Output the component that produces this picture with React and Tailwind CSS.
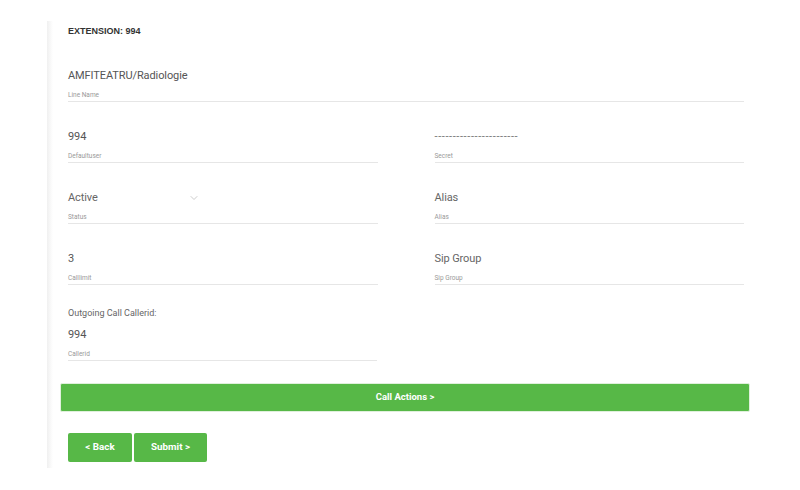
import { ChevronDown } from 'lucide-react'

function Field({ value, label, valueClass = 'text-[#555]', chevron = false }) {
  return (
    <div className="border-b border-[#e6e6e6] pb-[1px]">
      <div className="flex items-center h-[20px]">
        <span className={`text-[11px] tracking-[-0.1px] ${valueClass}`}>{value}</span>
        {chevron && <ChevronDown className="ml-[90px] h-3 w-3 text-[#bbb]" strokeWidth={1.5} />}
      </div>
      <div className="mt-[4px] text-[6.5px] leading-[10px] text-[#999]">{label}</div>
    </div>
  )
}

export default function App() {
  return (
    <div className="w-[800px] h-[490px] bg-white font-['Roboto',sans-serif] pt-[21px]">
      <div className="ml-[47px] h-[447px] bg-gradient-to-r from-[#f0f0f0] to-white w-[6px] float-left" />
      <div className="ml-[60px] w-[690px] pt-[5px]">
        <div className="pl-[8px] font-['Liberation_Sans',sans-serif] font-bold text-[9px] text-[#333] h-[10px] leading-[10px]">
          EXTENSION: 994
        </div>

        <div className="px-[8px] pr-[6px]">
          <div className="mt-[30px]">
            <Field value="AMFITEATRU/Radiologie" label="Line Name" />
          </div>

          <div className="grid grid-cols-2 gap-x-[57px] mt-[25px]">
            <Field value="994" label="Defaultuser" />
            <Field value="-----------------------" label="Secret" valueClass="text-[#777] tracking-[0.6px]" />
          </div>

          <div className="grid grid-cols-2 gap-x-[57px] mt-[25px]">
            <Field value="Active" label="Status" valueClass="text-[#666]" chevron />
            <Field value="Alias" label="Alias" valueClass="text-[#666]" />
          </div>

          <div className="grid grid-cols-2 gap-x-[57px] mt-[25px]">
            <Field value="3" label="Calllimit" />
            <Field value="Sip Group" label="Sip Group" valueClass="text-[#666]" />
          </div>

          <div className="w-[309px] mt-[21px]">
            <div className="text-[9px] text-[#666] h-[14px] leading-[14px]">Outgoing Call Callerid:</div>
            <div className="mt-[5px]">
              <Field value="994" label="Callerid" />
            </div>
          </div>
        </div>

        <button className="mt-[22px] w-full h-[29px] bg-[#57b847] border border-[#e0f0dc] rounded-[2px] text-white font-bold text-[9.5px]">
          Call Actions &gt;
        </button>

        <div className="flex gap-[2px] mt-[21px] pl-[8px]">
          <button className="w-[64px] h-[29px] bg-[#57b847] rounded-[2px] text-white font-bold text-[9.8px]">&lt; Back</button>
          <button className="w-[73px] h-[29px] bg-[#57b847] rounded-[2px] text-white font-bold text-[9.8px]">Submit &gt;</button>
        </div>
      </div>
    </div>
  )
}
